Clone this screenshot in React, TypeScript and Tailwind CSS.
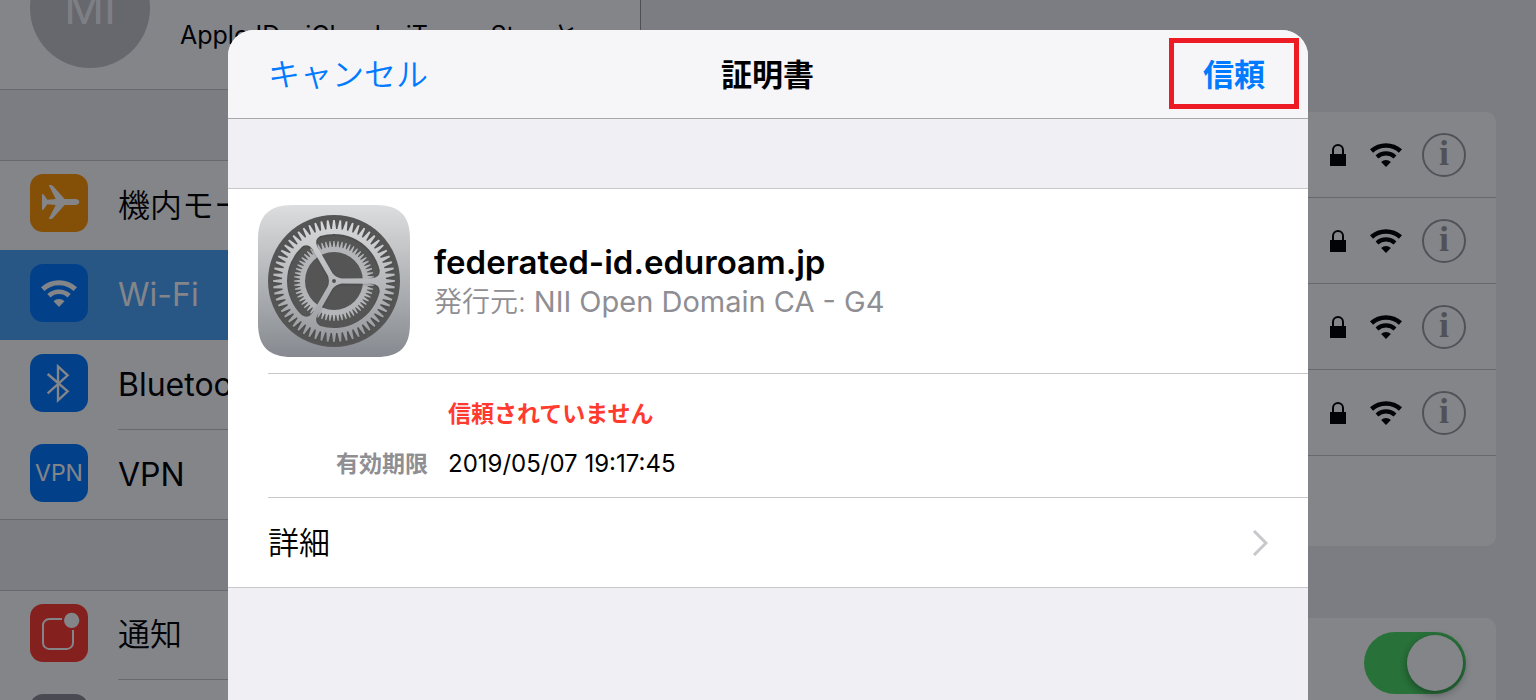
import type { ReactNode } from 'react';
import { clsx } from 'clsx';

const networks = ['network-1', 'network-2', 'network-3', 'network-4'];

function WifiIcon({ className }: { className?: string }) {
  return (
    <svg viewBox="0 0 92 69" className={className} aria-hidden="true">
      <g fill="none" stroke="currentColor" strokeWidth="13">
        <path d="M4.4 23.1A61.5 61.5 0 0 1 87.6 23.1" />
        <path d="M20.1 40.2A38 38 0 0 1 71.9 40.2" strokeWidth="12" />
      </g>
      <path d="M46 69L32 54.5A20 20 0 0 1 60 54.5Z" fill="currentColor" />
    </svg>
  );
}

function LockIcon() {
  return (
    <svg viewBox="0 0 48 66" className="h-[22px] w-4" aria-hidden="true">
      <path d="M9 34V18a15 15 0 0 1 30 0v16" fill="none" stroke="currentColor" strokeWidth="6" />
      <path d="M0 30h48v36H0z" fill="currentColor" />
    </svg>
  );
}

function PlaneIcon() {
  return (
    <svg viewBox="0 0 174 174" className="size-full" aria-hidden="true">
      <path
        d="M148 84C148 79 142 75 136 75H104L69 36Q66 33 62 33H56L77 75L52 77L42 63Q40 60 36 60V108Q40 108 42 105L52 91L77 93L56 135H62Q66 135 69 132L104 93H136C142 93 148 89 148 84Z"
        fill="currentColor"
      />
    </svg>
  );
}

function BluetoothIcon() {
  return (
    <svg viewBox="0 0 174 174" className="size-full" aria-hidden="true">
      <path
        d="M53 60L113 112L84 139V37L113 64L53 118"
        fill="none"
        stroke="currentColor"
        strokeWidth="7"
      />
    </svg>
  );
}

function NotificationIcon() {
  return (
    <svg viewBox="0 0 174 174" className="size-full" aria-hidden="true">
      <path
        d="M96 45H58A19 19 0 0 0 39 64V116A19 19 0 0 0 58 135H110A19 19 0 0 0 129 116V78"
        fill="none"
        stroke="currentColor"
        strokeWidth="6"
      />
      <circle cx="125" cy="49" r="23" fill="currentColor" />
    </svg>
  );
}

/** Point on a circle around the centre of the gear, angle in degrees */
function polar(r: number, deg: number) {
  const a = (deg * Math.PI) / 180;
  return `${(76 + r * Math.cos(a)).toFixed(2)} ${(76 + r * Math.sin(a)).toFixed(2)}`;
}

function gearOutline(count: number, root: number, tip: number) {
  const step = 360 / count;
  const points: string[] = [];
  for (let i = 0; i < count; i++) {
    const a = i * step;
    points.push(
      polar(root, a - step * 0.38),
      polar(tip, a - step * 0.13),
      polar(tip, a + step * 0.13),
      polar(root, a + step * 0.38),
    );
  }
  return `M${points.join('L')}Z`;
}

function circlePath(r: number) {
  return `M${76 - r} 76a${r} ${r} 0 1 0 ${2 * r} 0a${r} ${r} 0 1 0 ${-2 * r} 0Z`;
}

/** The opening between two spokes, starting at the given angle */
function opening(start: number) {
  const p = (r: number, deg: number) => polar(r, start + deg);
  return [
    `M${p(8, 19)}`,
    `L${p(38, 4)}`,
    `Q${p(46, 4)} ${p(47, 13)}`,
    `A47 47 0 0 1 ${p(47, 107)}`,
    `Q${p(46, 116)} ${p(38, 116)}`,
    `L${p(8, 101)}`,
    `Q${p(4, 60)} ${p(8, 19)}Z`,
  ].join('');
}

const frontGear =
  gearOutline(60, 52, 61) + opening(0) + opening(120) + opening(240) + circlePath(2);
const backGear = gearOutline(60, 34, 40) + circlePath(29);

function SettingsIcon() {
  return (
    <svg viewBox="0 0 152 152" className="size-[152px] shrink-0" aria-hidden="true">
      <defs>
        <linearGradient id="plate" x1="0" y1="0" x2="0" y2="1">
          <stop offset="0" stopColor="#dcddde" />
          <stop offset="1" stopColor="#868a90" />
        </linearGradient>
        <linearGradient id="gear" x1="0" y1="0" x2="0" y2="1">
          <stop offset="0" stopColor="#d8d9da" />
          <stop offset="1" stopColor="#96989d" />
        </linearGradient>
        <filter id="gear-shadow" x="-10%" y="-10%" width="120%" height="120%">
          <feDropShadow dx="0" dy="1" stdDeviation="1" floodColor="#000" floodOpacity="0.2" />
        </filter>
      </defs>
      <path
        d="M34 0H118C142 0 152 11 152 34V118C152 142 142 152 118 152H34C11 152 0 142 0 118V34C0 11 11 0 34 0Z"
        fill="url(#plate)"
      />
      <circle cx="76" cy="76" r="66" fill="#555" />
      <path d={backGear} fill="#b4b5b8" fillRule="evenodd" />
      <path d={frontGear} fill="url(#gear)" fillRule="evenodd" filter="url(#gear-shadow)" />
    </svg>
  );
}

interface MenuRowProps {
  icon?: ReactNode;
  iconClass: string;
  label?: string;
  first?: boolean;
  active?: boolean;
  divider?: 'inset' | 'full' | 'none';
}

function MenuRow({ icon, iconClass, label, first, active, divider = 'inset' }: MenuRowProps) {
  return (
    <a
      href="#"
      className={clsx(
        'flex h-[90px] gap-[30px] pl-[30px]',
        first && 'border-t border-t-[#c8c7cc]',
        active ? 'bg-[#4ba3f8] text-white' : 'bg-white',
        divider === 'full' && 'border-b border-b-[#c8c7cc]',
      )}
    >
      <span
        className={clsx(
          'flex size-[58px] shrink-0 items-center justify-center rounded-[13px] text-white',
          first ? 'mt-[13px]' : 'mt-[14px]',
          iconClass,
        )}
      >
        {icon}
      </span>
      <span
        className={clsx(
          'flex flex-1 items-center text-[32px]',
          divider === 'inset' && 'border-b border-[#c8c7cc]',
        )}
      >
        {label}
      </span>
    </a>
  );
}

function Sidebar() {
  return (
    <aside className="w-5/12 shrink-0 overflow-hidden bg-[#efeff4]">
      <div className="flex h-[90px] gap-[30px] border-b border-[#c8c7cc] bg-white pl-[30px]">
        <div className="-mt-[52px] flex size-[120px] shrink-0 items-center justify-center rounded-full bg-[#c6c6ca] text-[44px] text-[#f4f4f6]">
          MI
        </div>
        <p className="pt-[19px] text-[25px] leading-8 whitespace-nowrap">
          Apple ID、iCloud、iTunes Storeと
        </p>
      </div>
      <nav className="mt-[70px] font-[350]">
        <MenuRow first icon={<PlaneIcon />} iconClass="bg-[#ff9500]" label="機内モード" divider="none" />
        <div className="font-normal">
          <MenuRow
            active
            icon={<WifiIcon className="h-[27px] w-9" />}
            iconClass="bg-[#007aff]"
            label="Wi-Fi"
            divider="none"
          />
          <MenuRow icon={<BluetoothIcon />} iconClass="bg-[#007aff]" label="Bluetooth" />
          <MenuRow
            icon={<span className="text-[23px]">VPN</span>}
            iconClass="bg-[#007aff]"
            label="VPN"
            divider="full"
          />
        </div>
      </nav>
      <nav className="mt-[70px] font-[350]">
        <MenuRow first icon={<NotificationIcon />} iconClass="bg-[#ff3b30]" label="通知" />
        <MenuRow iconClass="bg-[#8e8e93]" />
      </nav>
    </aside>
  );
}

function NetworkPane() {
  return (
    <main className="flex-1 border-l border-[#98989d] bg-[#efeff4] px-10 pt-28">
      <ul className="overflow-hidden rounded-[10px] bg-white">
        {networks.map((id) => (
          <li
            key={id}
            className="flex h-[86px] items-center justify-end border-b border-[#c8c7cc] pr-[30px]"
          >
            <LockIcon />
            <WifiIcon className="mr-5 ml-6 h-6 w-8" />
            <button
              type="button"
              aria-label="情報"
              className="flex size-11 items-center justify-center rounded-full border-2 border-[#9c9ca0] pb-1 font-['Liberation_Serif',serif] text-[36px] leading-none font-bold text-[#9c9ca0]"
            >
              i
            </button>
          </li>
        ))}
        <li className="h-[90px]" />
      </ul>
      <div className="mt-[72px] flex h-[90px] items-center justify-end rounded-[10px] bg-white pr-[30px]">
        <input
          type="checkbox"
          role="switch"
          aria-label="接続を確認"
          defaultChecked
          className="flex h-[62px] w-[102px] appearance-none items-center rounded-full bg-[#4cd964] px-[3px] before:size-14 before:rounded-full before:bg-white before:shadow-[0_3px_8px_rgba(0,0,0,0.4)] checked:justify-end"
        />
      </div>
    </main>
  );
}

function CertificateDialog() {
  return (
    <section
      role="dialog"
      aria-label="証明書"
      className="flex w-full max-w-[1080px] flex-col overflow-hidden rounded-t-[26px] bg-[#efeff4]"
    >
      <header className="grid h-[89px] grid-cols-3 items-start border-b border-[#a7a7aa] bg-[#f6f6f8] pt-2 pr-[9px] pl-10 leading-[74px]">
        <button type="button" className="justify-self-start text-[32px] font-[350] text-[#007aff]">
          キャンセル
        </button>
        <h1 className="justify-self-center pr-8 text-[31px] font-bold">証明書</h1>
        <button
          type="button"
          className="h-[71px] w-[130px] justify-self-end border-[5px] border-[#ed1c24] pt-[2px] text-[31px] leading-none font-bold text-[#007aff]"
        >
          信頼
        </button>
      </header>

      <div className="mt-[69px] border-y border-[#c8c7cc] bg-white">
        <div className="flex items-center gap-6 py-4 pl-[30px]">
          <SettingsIcon />
          <div className="pt-[2px] leading-10">
            <h2 className="text-[33px] font-semibold">federated-id.eduroam.jp</h2>
            <p className="text-[28px] text-[#8e8e93]">
              <span className="font-[350]">発行元: </span>
              <span className="text-[29px]">NII Open Domain CA - G4</span>
            </p>
          </div>
        </div>
        <div className="ml-10 border-y border-[#c8c7cc] pt-[15px] pb-2">
          <dl className="grid grid-cols-[160px_1fr] gap-x-5 text-[23px] leading-[50px]">
            <dd className="col-start-2 font-bold text-[#ff3b30]">信頼されていません</dd>
            <dt className="text-right font-bold text-[#8e8e93]">有効期限</dt>
            <dd className="text-2xl leading-[50px]">2019/05/07 19:17:45</dd>
          </dl>
        </div>
        <a
          href="#"
          className="flex h-[89px] items-center justify-between pt-px pr-10 pl-10 text-[31px] font-[350]"
        >
          詳細
          <svg viewBox="0 0 16 26" className="h-[26px] w-4" aria-hidden="true">
            <path d="M2 1L14 13L2 25" fill="none" stroke="#c7c7cc" strokeWidth="3" />
          </svg>
        </a>
      </div>
    </section>
  );
}

export default function App() {
  return (
    <div
      lang="ja"
      className="relative flex h-screen overflow-hidden font-[Inter,'Noto_Sans_CJK_JP',sans-serif] text-black"
    >
      <Sidebar />
      <NetworkPane />
      <div className="absolute inset-0 flex justify-center bg-[rgba(4,6,14,0.49)] pt-[30px]">
        <CertificateDialog />
      </div>
    </div>
  );
}
